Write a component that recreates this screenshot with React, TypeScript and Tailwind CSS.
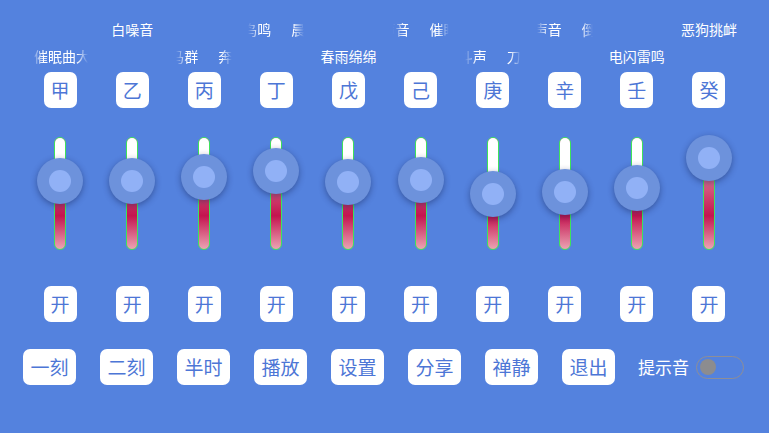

const CJK = "font-['Noto_Sans_CJK_SC','Noto_Sans',sans-serif]";

type Channel = {
  stem: string;
  // marquee label: [before gap, after gap], offset of the strip in px, row
  label: [string, string];
  offset: number;
  row: 1 | 2;
  thumb: number; // thumb centre, px from track top
};

const CHANNELS: Channel[] = [
  { stem: "甲", label: ["催眠曲大调", ""], offset: 2, row: 2, thumb: 44 },
  { stem: "乙", label: ["白噪音", ""], offset: 0, row: 1, thumb: 44 },
  { stem: "丙", label: ["马群", "奔腾"], offset: -6, row: 2, thumb: 40 },
  { stem: "丁", label: ["鸟鸣", "晨曦"], offset: -5, row: 1, thumb: 34 },
  { stem: "戊", label: ["春雨绵绵", ""], offset: 0, row: 2, thumb: 45 },
  { stem: "己", label: ["声音", "催眠"], offset: -11, row: 1, thumb: 43 },
  { stem: "庚", label: ["打斗声", "刀剑"], offset: -20, row: 2, thumb: 57 },
  { stem: "辛", label: ["声音", "倒影"], offset: -3, row: 1, thumb: 55 },
  { stem: "壬", label: ["电闪雷鸣", ""], offset: 0, row: 2, thumb: 51 },
  { stem: "癸", label: ["恶狗挑衅", ""], offset: 0, row: 1, thumb: 21 },
];

const ACTIONS = ["一刻", "二刻", "半时", "播放", "设置", "分享", "禅静", "退出"];

function Marquee({ ch }: { ch: Channel }) {
  const [a, b] = ch.label;
  if (!b && ch.offset === 0) {
    return <div className="whitespace-nowrap text-[14px] leading-5 text-white">{a}</div>;
  }
  return (
    <div className="w-[56px] overflow-hidden [mask-image:linear-gradient(to_right,transparent,black_11px,black_calc(100%-11px),transparent)]">
      <div
        className="flex whitespace-nowrap text-[14px] leading-5 text-white"
        style={{ transform: `translateX(${ch.offset}px)` }}
      >
        <span>{a}</span>
        {b && <span className="ml-[20px]">{b}</span>}
      </div>
    </div>
  );
}

function Slider({ thumb }: { thumb: number }) {
  return (
    <div className="relative mt-[29px] h-[113px] w-[12px]">
      <div className="h-full w-full overflow-hidden rounded-full border border-[#3fe35a] bg-[linear-gradient(to_bottom,#e07a98_0%,#d76a8b_38%,#c4144f_70%,#eba3b3_100%)]">
        <div
          className="w-full bg-[linear-gradient(to_bottom,#ffffff_55%,#cfd4de_100%)]"
          style={{ height: thumb }}
        />
      </div>
      <div
        className="absolute left-1/2 flex h-[46px] w-[46px] -translate-x-1/2 items-center justify-center rounded-full bg-[#6d92dc] shadow-[0_2px_6px_rgba(20,30,80,0.45)]"
        style={{ top: thumb - 23 }}
      >
        <div className="h-[22px] w-[22px] rounded-full bg-[#91b1f6]" />
      </div>
    </div>
  );
}

function Tile({ children }: { children: React.ReactNode }) {
  return (
    <div className="flex h-[36px] w-[33px] items-center justify-center rounded-[7px] bg-white text-[19px] text-[#4d76d6]">
      {children}
    </div>
  );
}

export default function App() {
  return (
    <div className={`h-[433px] w-[769px] overflow-hidden bg-[#5482de] ${CJK}`}>
      <div className="grid grid-cols-10 px-[24px] pt-[19px]">
        {CHANNELS.map((ch) => (
          <div key={ch.stem} className="flex flex-col items-center">
            <div className="flex h-5 items-center justify-center">{ch.row === 1 && <Marquee ch={ch} />}</div>
            <div className="mt-[7px] flex h-5 items-center justify-center">
              {ch.row === 2 && <Marquee ch={ch} />}
            </div>
            <div className="mt-[6px]">
              <Tile>{ch.stem}</Tile>
            </div>
            <Slider thumb={ch.thumb} />
            <div className="mt-[36px]">
              <Tile>开</Tile>
            </div>
          </div>
        ))}
      </div>

      <div className="mt-[27px] flex items-center gap-6 pl-[23px]">
        {ACTIONS.map((a) => (
          <button
            key={a}
            className="flex h-[36px] w-[53px] items-center justify-center rounded-[7px] bg-white text-[19px] text-[#4d76d6]"
          >
            {a}
          </button>
        ))}
        <div className="-ml-[1px] flex items-center gap-[7px]">
          <span className="text-[17px] text-white">提示音</span>
          <div className="flex h-[23px] w-[48px] items-center rounded-full border-[1.5px] border-[#8e8e96] pl-[3px]">
            <div className="h-[16px] w-[16px] rounded-full bg-[#8c8c8f]" />
          </div>
        </div>
      </div>
    </div>
  );
}
